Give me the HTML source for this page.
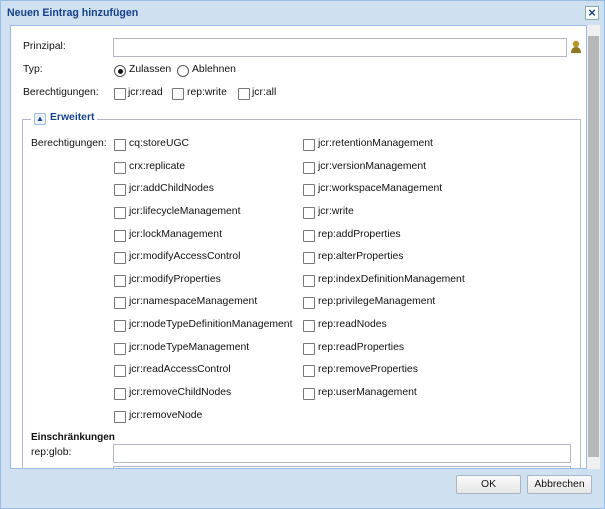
<!DOCTYPE html>
<html><head><style>
*{margin:0;padding:0;box-sizing:border-box}
body{width:605px;height:509px;overflow:hidden;background:#cfe0f1;font-family:"Liberation Sans",sans-serif;font-size:10.4px;color:#111;position:relative}
.a{position:absolute;white-space:nowrap}
.cb{position:absolute;width:12px;height:12px;border:1px solid #777;background:#fff;border-radius:1px}
.inp{position:absolute;border:1px solid #b5b8c8;background:#fff}
.btn{position:absolute;height:19px;border:1px solid #a9b4c2;border-radius:2px;background:linear-gradient(#fbfbfb,#e6e6e6);text-align:center;line-height:17px;font-size:10.4px}
</style></head><body>
<div class="a" style="left:0;top:0;width:605px;height:509px;border:1px solid #99bbe8"></div>
<div class="a" style="left:7px;top:7px;font-weight:bold;color:#15428b;font-size:10.6px">Neuen Eintrag hinzufügen</div>
<div class="a" style="left:585px;top:6px;width:14px;height:14px;border:1px solid #8aa;background:#fff;color:#15428b;font-size:13px;line-height:11px;text-align:center;font-weight:bold">×</div>
<div class="a" style="left:10px;top:25px;width:577px;height:444px;background:#fff;border:1px solid #99bbe8;overflow:hidden">
<div class="a" style="left:11px;top:93px;width:559px;height:360px;border:1px solid #b5b8c8"></div>
<div class="inp" style="left:102px;top:440px;width:458px;height:10px"></div>
</div>
<div class="a" style="left:587px;top:25px;width:13px;height:444px;background:#f0f0f0"></div>
<div class="a" style="left:588px;top:36px;width:11px;height:421px;background:#b7b7b7"></div>
<div class="a" style="left:23px;top:41px">Prinzipal:</div>
<div class="inp" style="left:113px;top:38px;width:454px;height:19px"></div>
<svg class="a" style="left:570px;top:40px" width="12" height="14" viewBox="0 0 12 14"><circle cx="6" cy="4" r="3.2" fill="#b8962c"/><path d="M1 13c0-4 2-6 5-6s5 2 5 6z" fill="#8b7a1e"/></svg>
<div class="a" style="left:23px;top:64px">Typ:</div>
<div class="a" style="left:114px;top:65px;width:12px;height:12px;border:1px solid #555;border-radius:50%;background:#fff"><div style="margin:2.5px;width:5px;height:5px;border-radius:50%;background:#111"></div></div>
<div class="a" style="left:129px;top:64px">Zulassen</div>
<div class="a" style="left:177px;top:65px;width:12px;height:12px;border:1px solid #555;border-radius:50%;background:#fff"></div>
<div class="a" style="left:192px;top:64px">Ablehnen</div>
<div class="a" style="left:23px;top:87px">Berechtigungen:</div>
<div class="cb" style="left:114px;top:88px"></div><div class="a" style="left:128px;top:87px">jcr:read</div>
<div class="cb" style="left:172px;top:88px"></div><div class="a" style="left:187px;top:87px">rep:write</div>
<div class="cb" style="left:238px;top:88px"></div><div class="a" style="left:252px;top:87px">jcr:all</div>
<div class="a" style="left:31px;top:112px;width:66px;height:14px;background:#fff"></div>
<div class="a" style="left:34px;top:113px;width:12px;height:12px;border:1px solid #99bbe8;border-radius:2px;background:#eef3fb;color:#15428b;font-size:8px;line-height:10px;text-align:center">▲</div>
<div class="a" style="left:50px;top:112px;font-weight:bold;color:#15428b">Erweitert</div>
<div class="a" style="left:31px;top:138px">Berechtigungen:</div>
<div class="a" style="left:31px;top:432px;font-weight:bold;font-size:10px">Einschränkungen</div>
<div class="a" style="left:31px;top:447px">rep:glob:</div>
<div class="inp" style="left:113px;top:444px;width:458px;height:19px"></div>
<div class="btn" style="left:456px;top:475px;width:65px">OK</div>
<div class="btn" style="left:527px;top:475px;width:65px">Abbrechen</div>
<div style="position:absolute;left:0;top:0">
<div class="cb" style="left:114px;top:139px"></div><div class="a" style="left:129px;top:138px">cq:storeUGC</div>
<div class="cb" style="left:114px;top:162px"></div><div class="a" style="left:129px;top:161px">crx:replicate</div>
<div class="cb" style="left:114px;top:184px"></div><div class="a" style="left:129px;top:183px">jcr:addChildNodes</div>
<div class="cb" style="left:114px;top:207px"></div><div class="a" style="left:129px;top:206px">jcr:lifecycleManagement</div>
<div class="cb" style="left:114px;top:230px"></div><div class="a" style="left:129px;top:229px">jcr:lockManagement</div>
<div class="cb" style="left:114px;top:252px"></div><div class="a" style="left:129px;top:251px">jcr:modifyAccessControl</div>
<div class="cb" style="left:114px;top:275px"></div><div class="a" style="left:129px;top:274px">jcr:modifyProperties</div>
<div class="cb" style="left:114px;top:297px"></div><div class="a" style="left:129px;top:296px">jcr:namespaceManagement</div>
<div class="cb" style="left:114px;top:320px"></div><div class="a" style="left:129px;top:319px">jcr:nodeTypeDefinitionManagement</div>
<div class="cb" style="left:114px;top:343px"></div><div class="a" style="left:129px;top:342px">jcr:nodeTypeManagement</div>
<div class="cb" style="left:114px;top:365px"></div><div class="a" style="left:129px;top:364px">jcr:readAccessControl</div>
<div class="cb" style="left:114px;top:388px"></div><div class="a" style="left:129px;top:387px">jcr:removeChildNodes</div>
<div class="cb" style="left:114px;top:411px"></div><div class="a" style="left:129px;top:410px">jcr:removeNode</div>
<div class="cb" style="left:303px;top:139px"></div><div class="a" style="left:318px;top:138px">jcr:retentionManagement</div>
<div class="cb" style="left:303px;top:162px"></div><div class="a" style="left:318px;top:161px">jcr:versionManagement</div>
<div class="cb" style="left:303px;top:184px"></div><div class="a" style="left:318px;top:183px">jcr:workspaceManagement</div>
<div class="cb" style="left:303px;top:207px"></div><div class="a" style="left:318px;top:206px">jcr:write</div>
<div class="cb" style="left:303px;top:230px"></div><div class="a" style="left:318px;top:229px">rep:addProperties</div>
<div class="cb" style="left:303px;top:252px"></div><div class="a" style="left:318px;top:251px">rep:alterProperties</div>
<div class="cb" style="left:303px;top:275px"></div><div class="a" style="left:318px;top:274px">rep:indexDefinitionManagement</div>
<div class="cb" style="left:303px;top:297px"></div><div class="a" style="left:318px;top:296px">rep:privilegeManagement</div>
<div class="cb" style="left:303px;top:320px"></div><div class="a" style="left:318px;top:319px">rep:readNodes</div>
<div class="cb" style="left:303px;top:343px"></div><div class="a" style="left:318px;top:342px">rep:readProperties</div>
<div class="cb" style="left:303px;top:365px"></div><div class="a" style="left:318px;top:364px">rep:removeProperties</div>
<div class="cb" style="left:303px;top:388px"></div><div class="a" style="left:318px;top:387px">rep:userManagement</div>
</div>
</body></html>
